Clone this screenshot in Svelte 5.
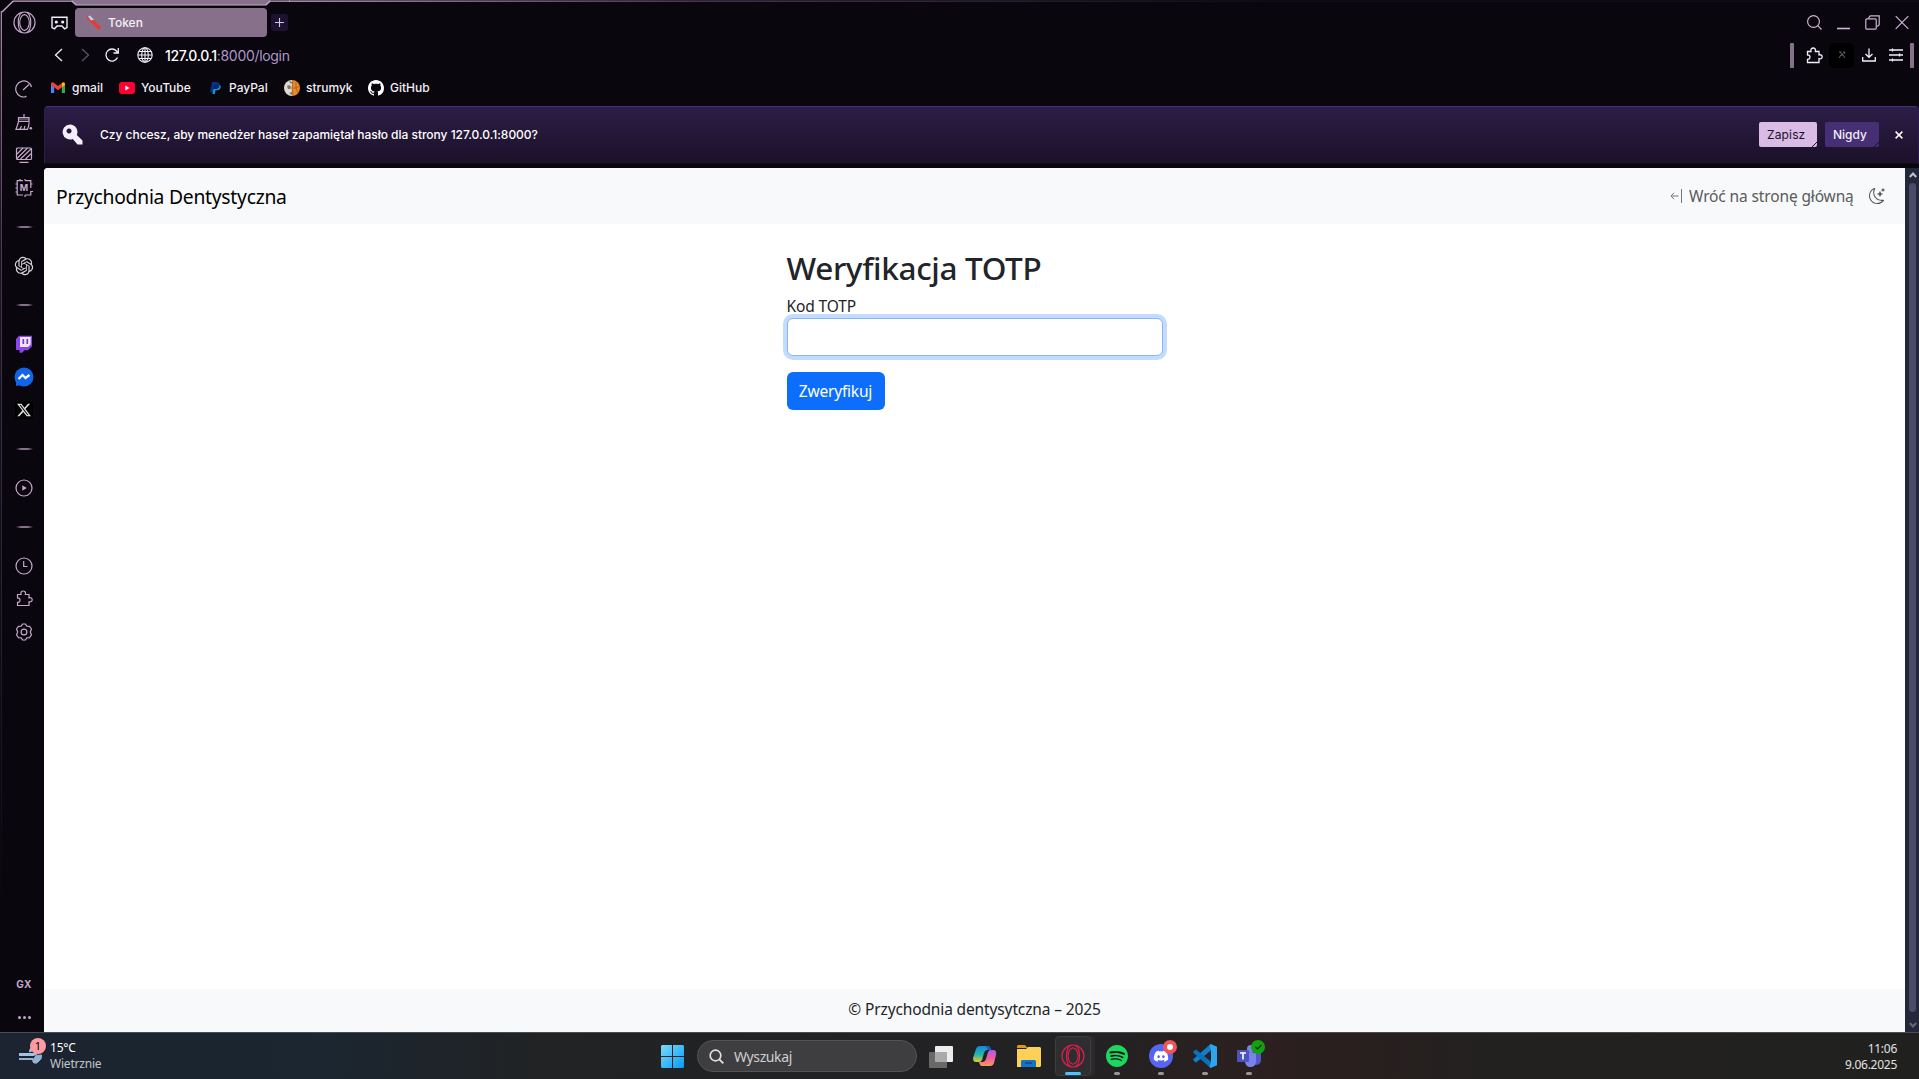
<script>
  const openai = 'M22.2819 9.8211a5.9847 5.9847 0 0 0-.5157-4.9108 6.0462 6.0462 0 0 0-6.5098-2.9A6.0651 6.0651 0 0 0 4.9807 4.1818a5.9847 5.9847 0 0 0-3.9977 2.9 6.0462 6.0462 0 0 0 .7427 7.0966 5.98 5.98 0 0 0 .511 4.9107 6.051 6.051 0 0 0 6.5146 2.9001A5.9847 5.9847 0 0 0 13.2599 24a6.0557 6.0557 0 0 0 5.7718-4.2058 5.9894 5.9894 0 0 0 3.9977-2.9001 6.0557 6.0557 0 0 0-.7475-7.0729zm-9.022 12.6081a4.4755 4.4755 0 0 1-2.8764-1.0408l.1419-.0804 4.7783-2.7582a.7948.7948 0 0 0 .3927-.6813v-6.7369l2.02 1.1686a.071.071 0 0 1 .038.052v5.5826a4.504 4.504 0 0 1-4.4945 4.4944zm-9.6607-4.1254a4.4708 4.4708 0 0 1-.5346-3.0137l.142.0852 4.783 2.7582a.7712.7712 0 0 0 .7806 0l5.8428-3.3685v2.3324a.0804.0804 0 0 1-.0332.0615L9.74 19.9502a4.4992 4.4992 0 0 1-6.1408-1.6464zM2.3408 7.8956a4.485 4.485 0 0 1 2.3655-1.9728V11.6a.7664.7664 0 0 0 .3879.6765l5.8144 3.3543-2.0201 1.1685a.0757.0757 0 0 1-.071 0l-4.8303-2.7865A4.504 4.504 0 0 1 2.3408 7.872zm16.5963 3.8558L13.1038 8.364 15.1192 7.2a.0757.0757 0 0 1 .071 0l4.8303 2.7913a4.4944 4.4944 0 0 1-.6765 8.1042v-5.6772a.79.79 0 0 0-.407-.667zm2.0107-3.0231l-.142-.0852-4.7735-2.7818a.7759.7759 0 0 0-.7854 0L9.409 9.2297V6.8974a.0662.0662 0 0 1 .0284-.0615l4.8303-2.7866a4.4992 4.4992 0 0 1 6.6802 4.66zM8.3065 12.863l-2.02-1.1638a.0804.0804 0 0 1-.038-.0567V6.0742a4.4992 4.4992 0 0 1 7.3757-3.4537l-.142.0805L8.704 5.459a.7948.7948 0 0 0-.3927.6813zm1.0976-2.3654l2.602-1.4998 2.6069 1.4998v2.9994l-2.5974 1.4997-2.6067-1.4997Z';
  const puzzle = 'M2.5 4.5H6C5.3 1.8 7 1 8.2 1s2.9.8 2.2 3.5H14v3.4c2-.6 3.2.5 3.2 1.9S16 12.300 14 11.700V15.500H2.500v-3.200C4.600 12.500 5 11 5 10S4.300 7.700 2.500 8Z';
</script>

{#snippet operaIcon(size)}
  <svg width={size} height={size} viewBox="0 0 24 24" fill="none" stroke="currentColor" stroke-width="1.15">
    <circle cx="12" cy="12" r="11" /><ellipse cx="12" cy="12" rx="5" ry="8.200" /><path d="M10 1.300C4 4 4 20 10 22.700M14 1.300c6 2.700 6 18.700 0 21.400" />
  </svg>
{/snippet}

<div class="desktop">
  <div class="browser">
    <svg class="frame" width="1919" height="1032" viewBox="0 0 1919 1032" fill="none">
      <defs>
        <linearGradient id="side" x1="0" y1="0" x2="0" y2="1"><stop stop-color="#a58ba9" /><stop offset=".25" stop-color="#4c3a52" /><stop offset=".8" stop-color="#1b1624" /><stop offset="1" stop-color="#09060d" /></linearGradient>
        <linearGradient id="top" x1="0" y1="0" x2="1" y2="0"><stop stop-color="#c9aed0" /><stop offset=".25" stop-color="#54405c" /><stop offset=".6" stop-color="#120d18" /></linearGradient>
      </defs>
      <path d="M71 0h200l-4 4.500H76Z" fill="#87718a" />
      <path d="M2 12 13 1.200h59l4 3.600h190l4-3.600h20" stroke="#c5a9cc" stroke-width="1.300" />
      <rect x="289" y="0.500" width="1630" height="1.300" fill="url(#top)" />
      <rect x="0.700" y="11" width="1.300" height="900" fill="url(#side)" />
    </svg>

    <aside>
      <div class="logo">{@render operaIcon(23)}</div>
      <div class="cell"><svg width="18" height="18" viewBox="0 0 18 18"><path d="M11.500 16.500A8 8 0 1 1 16.500 7M8 10l6-5.500M10 17l1-1" /></svg></div>
      <div class="cell"><svg width="18" height="18" viewBox="0 0 18 18"><path d="M9 1v4M3.500 8.500V4.700H14v4M2.800 8.500H14.500M3.500 9 1 16.300h11.500c1-2 1.600-4.500 1.600-7M5 16l1.500-3M9 16l1-3" /><rect x="4" y="5.500" width="10" height="2" fill="currentColor" stroke="none" opacity=".45" /><circle cx="15.800" cy="15.200" r="1.300" fill="currentColor" stroke="none" /></svg></div>
      <div class="cell"><svg width="18" height="18" viewBox="0 0 18 18"><rect x="1.500" y="2" width="15" height="11.500" rx="1" /><path d="m2 8 6-6M2 12.500 12.500 2M5.500 13 16 3M10.500 13 16 7.700M4.500 16.300h9" /></svg></div>
      <div class="cell"><div class="chip"><svg width="18" height="18" viewBox="0 0 18 18"><path d="M8 1.700H2.200V16H8M10 1.700h5.800V9M15.800 12v4H10M5 0v1.500M10 0v1.500M.5 5H2M.5 9H2M.5 13H2M16 12.500h2M16 5h1.500M10 16v2" /></svg><span>M</span></div></div>
      <div class="dash"><i></i></div>
      <div class="cell"><svg width="20" height="20" viewBox="-1 -1 26 26"><path d={openai} fill="#d5d3d9" stroke="none" /></svg></div>
      <div class="dash"><i></i></div>
      <div class="cell"><svg width="18" height="18" viewBox="0 0 18 18"><path d="M4 .7h13v10.500l-4 4H9.500L7 17.700H4.500V15H1V4Z" fill="#8c46e8" stroke="none" /><path d="M5 2h10.700v7.500L13 12H5Z" fill="#eee6fa" stroke="none" /><path d="M8.300 4v5M12.300 4v5" stroke="#7b3bd0" stroke-width="1.700" /></svg></div>
      <div class="cell"><svg width="20" height="20" viewBox="0 0 20 20"><circle cx="10" cy="10" r="9.500" fill="#1264e8" stroke="none" /><path d="M2 13v6l5-1Z" fill="#1264e8" stroke="none" /><path d="m4.500 12 4-4 3 3 4-3" stroke="#fff" stroke-width="2.200" /></svg></div>
      <div class="cell"><div class="xtile"><svg width="14" height="14" viewBox="0 0 24 24"><path fill="#ddd" stroke="none" d="M18.901 1.153h3.680l-8.040 9.190L24 22.846h-7.406l-5.800-7.584-6.638 7.584H.474l8.600-9.830L0 1.154h7.594l5.243 6.932ZM17.610 20.644h2.039L6.486 3.240H4.298Z" /></svg></div></div>
      <div class="dash"><i></i></div>
      <div class="cell"><svg width="18" height="18" viewBox="0 0 18 18"><circle cx="9" cy="9" r="8" /><path d="M7.300 6.300v5.400L11.800 9Z" fill="currentColor" stroke="none" /></svg></div>
      <div class="dash"><i></i></div>
      <div class="cell"><svg width="18" height="18" viewBox="0 0 18 18"><circle cx="9" cy="9" r="8" /><path d="M8.700 4v5.500h3.800" /></svg></div>
      <div class="cell"><svg width="18" height="18" viewBox="0 0 18 18"><path d={puzzle} /></svg></div>
      <div class="cell"><svg width="18" height="18" viewBox="0 0 18 18"><path stroke-linejoin="round" d="M7.500 1h3l1.300 2.200 2.700.100L16.500 6 15.300 9l1.200 3-2 2.700-2.700.100L10.500 17h-3l-1.300-2.200-2.700-.100L1.500 12l1.200-3L1.500 6l2-2.700 2.700-.100Z" /><circle cx="9" cy="9" r="2.900" /></svg></div>
      <div class="foot"><b>GX</b><span class="dots"><i></i><i></i><i></i></span></div>
    </aside>

    <main>
      <header class="titlebar">
        <svg class="pad" width="17" height="14" viewBox="0 0 17 14" fill="none" stroke="#f3eef7" stroke-width="1.400"><path d="M1 1.200h15V11.500l-2.500 1.300L11 10H6l-2.500 2.800L1 11.500Z" /><circle cx="5.300" cy="6" r=".9" fill="#fff" /><circle cx="11.700" cy="6" r=".9" fill="#fff" /></svg>
        <div class="tab">
          <svg width="15" height="15" viewBox="0 0 15 15"><path d="m2.500 2.500 10.300 10" stroke="#ed3833" stroke-width="3.600" stroke-linecap="round" /><path d="M2 1.500 4 .5l4 4-3 1Z" fill="#a9d9f2" /></svg>
          <span>Token</span>
        </div>
        <button class="plus" aria-label="Nowa karta"><svg width="9" height="9" viewBox="0 0 9 9"><path d="M4.500 0v9M0 4.500h9" stroke="#d4c6e0" stroke-width="1.100" /></svg></button>
        <div class="controls">
          <svg width="15" height="15" viewBox="0 0 15 15"><circle cx="6.500" cy="6.500" r="5.900" /><path d="m10.700 10.700 3.800 3.800" /></svg>
          <svg width="13" height="15" viewBox="0 0 13 15"><path d="M0 13.500h13" stroke-width="1.600" /></svg>
          <svg width="15" height="15" viewBox="0 0 15 15"><rect x=".8" y="3.800" width="10.400" height="10.400" rx="1" /><path d="M3.800 3.500v-1l1.500-1.700h8.900v9l-1.500 1.400h-1.200" /></svg>
          <svg width="14" height="15" viewBox="0 0 14 15"><path d="m.7 1.200 12.600 12.600M13.300 1.200.7 13.800" /></svg>
        </div>
      </header>

      <div class="address">
        <svg width="9" height="14" viewBox="0 0 9 14"><path d="M8 1 1.500 7 8 13" stroke="#f3eef7" /></svg>
        <svg class="fwd" width="9" height="14" viewBox="0 0 9 14"><path d="m1 1 6.500 6L1 13" /></svg>
        <svg class="reload" width="14" height="14" viewBox="0 0 14 14"><path d="M12.500 9.500A6 6 0 1 1 11.500 3L13 5M13.300 0v5H8.500" /></svg>
        <svg class="globe" width="16" height="16" viewBox="0 0 16 16"><circle cx="8" cy="8" r="7.200" /><ellipse cx="8" cy="8" rx="3.300" ry="7.200" /><path d="M8 1v14M1 8h14M2 4.500h12M2 11.500h12" /></svg>
        <span class="url"><b>127.0.0.1</b>:8000/login</span>
        <div class="tools">
          <i class="bar"></i>
          <svg class="pz" width="18" height="17" viewBox="0 0 18 17"><path d={puzzle} /></svg>
          <div class="ext"><svg width="8" height="8" viewBox="0 0 8 8"><path class="mark" d="m1 7 2-3h2l2 3M1 1h2v1.500M5 1h2L6 3M3 4l1-1.500L5 4" /></svg></div>
          <svg class="dl" width="14" height="14" viewBox="0 0 14 14"><path d="M7 .5V9M3.500 6 7 9.300 10.500 6M.7 9v4h12.600V9" /></svg>
          <svg class="sl" width="14" height="14" viewBox="0 0 14 14"><path d="M0 2h14M0 7h14M0 12h14M3.500 .5v3M10.500 5.500v3M3.500 10.500v3" /></svg>
          <i class="bar"></i>
        </div>
      </div>

      <nav class="bookmarks">
        <span class="bm b1"><svg width="14" height="11" viewBox="0 0 14 11"><path d="M0 1.500V11h3.200V4Z" fill="#4285f4" /><path d="M14 1.500V11h-3.200V4Z" fill="#34a853" /><path d="M10.800 4V1Q13-.7 14 1.500V3L10.800 5.500Z" fill="#fbbc04" /><path d="M0 1.500Q1-.7 3.200 1L7 4l3.800-3v4.300L7 8.200 0 3Z" fill="#ea4335" /></svg><span>gmail</span></span>
        <span class="bm b2"><svg width="16" height="12" viewBox="0 0 16 12"><rect width="16" height="12" rx="3" fill="#ff0033" /><path d="M6.300 3.500v5L10.500 6Z" fill="#fff" /></svg><span>YouTube</span></span>
        <span class="bm b3"><svg width="11" height="12" viewBox="0 0 11.500 13"><path d="M2 0h5q4 .5 3 4-1 3.500-5 3.500H4L3.300 11H0Z" fill="#00368f" /><path d="M10.200 3q2 1.500.8 4-1 2-4 2H5.800L5 13H2.500l.8-5Z" fill="#1297db" /><path d="M3.500 7.500 4 3.500h5l1.100.500q-.5 3.500-5 3.700Z" fill="#001f60" /></svg><span>PayPal</span></span>
        <span class="bm b4"><svg width="16" height="16" viewBox="0 0 16 16"><path d="M8 0a8 8 0 0 0 0 16Z" fill="#dfdac9" /><path d="M8 0a8 8 0 0 1 0 16Z" fill="#ea8b2b" /><path d="M9 1q-2 7 0 14M15.500 6Q11 9 8.500 8M12 2q-1 6 2 11" fill="none" stroke="#a85a1c" stroke-width=".8" /><path d="m3 6 2-1 2 1.500L6.500 9H4ZM5 1l3 1v1.500L6 3ZM5 13l3-1v3Z" fill="#77796f" /></svg><span>strumyk</span></span>
        <span class="bm b5"><svg width="16" height="16" viewBox="0 0 16 16"><path fill="#fff" d="M8 0C3.580 0 0 3.580 0 8c0 3.540 2.290 6.530 5.470 7.590.4.070.550-.170.550-.380 0-.190-.010-.820-.010-1.490-2.010.370-2.530-.490-2.690-.940-.090-.230-.480-.940-.820-1.130-.280-.150-.680-.520-.010-.530.630-.010 1.080.580 1.230.820.720 1.210 1.870.870 2.330.660.070-.520.280-.870.510-1.070-1.780-.2-3.640-.890-3.640-3.950 0-.870.310-1.590.820-2.150-.080-.2-.360-1.020.080-2.120 0 0 .670-.210 2.200.820.640-.180 1.320-.270 2-.270s1.360.090 2 .270c1.530-1.040 2.200-.820 2.200-.820.440 1.100.160 1.920.080 2.120.510.560.820 1.270.820 2.150 0 3.070-1.870 3.750-3.650 3.950.290.250.540.730.540 1.480 0 1.070-.010 1.930-.010 2.200 0 .210.150.460.550.380A8.010 8.010 0 0 0 16 8c0-4.420-3.580-8-8-8" /></svg><span>GitHub</span></span>
      </nav>

      <div class="banner">
        <svg width="21" height="21" viewBox="0 0 21 21"><path fill-rule="evenodd" fill="#f3eefa" d="M8 .5a7.500 7.500 0 0 1 6.800 10.600l5.700 5.400v4h-5L10.800 15A7.500 7.500 0 1 1 8 .5M7 4.500a2.500 2.500 0 1 0 .1 0Z" /></svg>
        <p>Czy chcesz, aby menedżer haseł zapamiętał hasło dla strony 127.0.0.1:8000?</p>
        <button class="save">Zapisz<svg width="5" height="5" viewBox="0 0 5 5"><path d="M0 5 5 0" stroke="#1b1126" /></svg></button>
        <button class="never">Nigdy<svg width="5" height="5" viewBox="0 0 5 5"><path d="M0 5 5 0" stroke="#1b1126" /></svg></button>
        <svg class="x" width="8" height="8" viewBox="0 0 8 8"><path d="m.6.6 6.800 6.800M7.400.6.6 7.400" stroke="#fff" stroke-width="1.500" /></svg>
      </div>

      <div class="viewport">
        <div class="page">
          <div class="navbar">
            <span class="brand">Przychodnia Dentystyczna</span>
            <svg class="back" width="12" height="14" viewBox="0 0 12 14" fill="none" stroke="#747678"><path d="M8.500 7H1M4 3.800 1 7l3 3.200" /><path d="M11.500 0v14" /></svg>
            <span class="home">Wróć na stronę główną</span>
            <svg width="16" height="16" viewBox="0 0 16 16" fill="#525457"><path d="M6 .278a.77.770 0 0 1 .080.858 7.200 7.200 0 0 0-.878 3.460c0 4.021 3.278 7.277 7.318 7.277q.792-.001 1.533-.160a.790.790 0 0 1 .810.316.730.730 0 0 1-.031.893A8.350 8.350 0 0 1 8.344 16C3.734 16 0 12.286 0 7.710 0 4.266 2.114 1.312 5.124.060A.750.750 0 0 1 6 .278M4.858 1.311A7.270 7.270 0 0 0 1.025 7.710c0 4.020 3.279 7.276 7.319 7.276a7.320 7.320 0 0 0 5.205-2.162q-.506.063-1.029.063c-4.610 0-8.343-3.714-8.343-8.290 0-1.167.242-2.278.681-3.286" /><path d="M10.794 3.148a.217.217 0 0 1 .412 0l.387 1.162c.173.518.579.924 1.097 1.097l1.162.387a.217.217 0 0 1 0 .412l-1.162.387a1.730 1.730 0 0 0-1.097 1.097l-.387 1.162a.217.217 0 0 1-.412 0l-.387-1.162A1.730 1.730 0 0 0 9.310 6.593l-1.162-.387a.217.217 0 0 1 0-.412l1.162-.387a1.730 1.730 0 0 0 1.097-1.097zM13.863.099a.145.145 0 0 1 .274 0l.258.774c.115.346.386.617.732.732l.774.258a.145.145 0 0 1 0 .274l-.774.258a1.160 1.160 0 0 0-.732.732l-.258.774a.145.145 0 0 1-.274 0l-.258-.774a1.160 1.160 0 0 0-.732-.732l-.774-.258a.145.145 0 0 1 0-.274l.774-.258c.346-.115.617-.386.732-.732z" /></svg>
          </div>
          <form>
            <h2>Weryfikacja TOTP</h2>
            <label for="code">Kod TOTP</label>
            <input id="code" type="text" />
            <button type="button">Zweryfikuj</button>
          </form>
          <footer><span>© Przychodnia dentysytczna – 2025</span></footer>
        </div>
        <div class="scroll">
          <svg width="8" height="6" viewBox="0 0 8 6"><path d="M.8 5 4 1.500 7.200 5" stroke="#c4c4c8" stroke-width="2" /></svg>
          <div class="thumb"></div>
          <svg width="8" height="6" viewBox="0 0 8 6"><path d="M.8 1 4 4.500 7.200 1" stroke="#676770" stroke-width="2" /></svg>
        </div>
      </div>
    </main>
  </div>

  <div class="taskbar">
    <div class="weather">
      <div class="wind">
        <svg width="25" height="26" viewBox="0 0 25 26"><path d="M1 15.500h14q5-.5 3-5-2-2.500-4.500-.5-1.500 1.500-1 3" stroke="#a9c1de" stroke-width="3" /><path d="M1 20h14q-1 3 1 4 3 1 5-2 3-2 2.500-6l-5.500.5-2 3" fill="#8fb2d5" stroke="#8fb2d5" stroke-width="1" /><path d="M1 20h14" stroke="#8fb2d5" stroke-width="2" /></svg>
        <span class="count">1</span>
      </div>
      <div class="wtext"><span>15°C</span><span class="dim">Wietrznie</span></div>
    </div>
    <div class="apps">
      <svg width="23" height="23" viewBox="0 0 23 23"><defs><linearGradient id="win" x1="0" y1="0" x2="1" y2="1"><stop stop-color="#7ad9fb" /><stop offset="1" stop-color="#0a9bf5" /></linearGradient></defs><path d="M1 0h10v11H0V1ZM12 0h10l1 1v10H12ZM0 12h11v11H1l-1-1ZM12 12h11v10l-1 1H12Z" fill="url(#win)" /></svg>
      <div class="search"><svg width="15" height="15" viewBox="0 0 15 15"><circle cx="6.500" cy="6.500" r="5.300" stroke="#dededf" stroke-width="1.700" /><path d="m10.300 10.300 4 4" stroke="#dededf" stroke-width="1.900" /></svg><span>Wyszukaj</span></div>
      <div class="app first"><svg width="24" height="23" viewBox="0 0 24 23"><rect x="6" y="1" width="18" height="16" rx="1" fill="#ededed" /><rect y="7" width="18" height="16" rx="1" fill="#757575" opacity=".85" /><path d="M6 7h12v10H6Z" fill="#aaa" /></svg></div>
      <div class="app"><svg width="24" height="24" viewBox="0 0 24 24"><defs><linearGradient id="cpa" x1="0" y1="0" x2="0" y2="1"><stop stop-color="#1585e6" /><stop offset=".55" stop-color="#25b9a5" /><stop offset="1" stop-color="#f0c72b" /></linearGradient><linearGradient id="cpb" x1="0" y1="0" x2="0" y2="1"><stop stop-color="#a95df0" /><stop offset=".5" stop-color="#ef5ca0" /><stop offset="1" stop-color="#fb9a60" /></linearGradient></defs><path d="M7 2h8q2 0 3 4h-4q-2 0-3 3l-2 7q-1 2-3 2H3q-3 0-3-4L3 5q1-3 4-3Z" fill="url(#cpa)" /><path d="M17 22H9q-2 0-3-4h4q2 0 3-3l2-7q1-2 3-2h2q4 0 3 5l-2 8q-1 3-4 3Z" fill="url(#cpb)" /><path d="M13 2h2q2 0 3 4h-3Z" fill="#1c57c8" /></svg></div>
      <div class="app"><svg width="24" height="22" viewBox="0 0 24 22"><path d="M1 0h7l2.500 3H0V1Z" fill="#dc9a0c" /><path d="M0 4h9l2-2h12l1 1v18l-1 1H0Z" fill="#fdd057" /><path d="M4 22v-6l1-1h13l1 1v6Z" fill="#1273c7" /><path d="M8 18h7" stroke="#0a4a92" stroke-width="1.500" /></svg></div>
      <div class="app active">{@render operaIcon(24)}<i class="run on"></i></div>
      <div class="app"><svg width="22" height="22" viewBox="0 0 24 24"><circle cx="12" cy="12" r="11" fill="#101a13" /><path fill="#1ed760" d="M12 0C5.400 0 0 5.400 0 12s5.400 12 12 12 12-5.400 12-12S18.660 0 12 0zm5.521 17.340c-.240.359-.660.480-1.021.240-2.820-1.740-6.360-2.101-10.561-1.141-.418.122-.779-.179-.899-.539-.120-.421.180-.780.540-.900 4.560-1.021 8.520-.600 11.640 1.320.420.180.479.659.301 1.020zm1.440-3.300c-.301.420-.841.600-1.262.300-3.239-1.980-8.159-2.580-11.939-1.380-.479.120-1.020-.120-1.140-.600-.120-.480.120-1.021.600-1.141C9.600 9.900 15 10.561 18.720 12.840c.361.181.540.780.241 1.200zm.120-3.360C15.240 8.400 8.820 8.160 5.160 9.301c-.600.179-1.200-.181-1.380-.721-.180-.601.180-1.200.720-1.381 4.260-1.260 11.280-1.020 15.721 1.621.539.300.719 1.020.419 1.560-.299.421-1.020.599-1.559.300z" /></svg><i class="run"></i></div>
      <div class="app"><svg width="24" height="24" viewBox="0 0 24 24"><circle cx="12" cy="12" r="12" fill="#5865f2" /><path transform="translate(4.800 5) scale(.6)" fill="#fff" fill-rule="evenodd" d="M20.317 4.370a19.800 19.800 0 0 0-4.885-1.515c-.240.370-.520.870-.690 1.290a18.300 18.300 0 0 0-5.486 0c-.170-.400-.420-.880-.650-1.290a19.700 19.700 0 0 0-4.930 1.540C.533 9.046-.319 13.580.100 18.060a19.900 19.900 0 0 0 6.050 3.080c.500-.650.920-1.350 1.280-2.080a13 13 0 0 1-1.920-.930l.450-.420c3.930 1.793 8.180 1.793 12.060 0l.450.420a12 12 0 0 1-1.910.930c.370.730.790 1.420 1.270 2.080a19.800 19.800 0 0 0 6.070-3.080c.500-5.177-.838-9.674-3.583-13.690ZM8.020 15.330c-1.180 0-2.157-1.086-2.157-2.419s.956-2.419 2.157-2.419 2.176 1.095 2.157 2.419c0 1.333-.956 2.419-2.157 2.419Zm7.975 0c-1.183 0-2.157-1.086-2.157-2.419s.955-2.419 2.157-2.419 2.176 1.095 2.157 2.419c0 1.333-.946 2.419-2.157 2.419Z" /></svg><span class="badge red"></span><i class="run"></i></div>
      <div class="app"><svg width="24" height="24" viewBox="0 0 24 24"><path d="m17.500 0 1 6L3 18.500 1 17l-1-1.500 17-15Z" fill="#1180cc" /><path d="M3 5.500 1.200 6.800 0 8.500l17.500 15.500 1-6Z" fill="#0b70bb" /><path d="M17.500 0 24 2.800v18.400L17.500 24l-1-1.500 1.500-4.500V6l-1.500-4.500Z" fill="#2aa7f0" /></svg><i class="run"></i></div>
      <div class="app"><svg width="24" height="24" viewBox="0 0 24 24"><circle cx="14" cy="5" r="4" fill="#7b83eb" /><path d="M17 8h7v9q-1 4-6 4Z" fill="#5059c9" /><path d="M8 9h11v9q-1 5.500-6 5-4 0-5-5Z" fill="#7b83eb" /><rect y="6" width="12" height="12" rx="1" fill="#4b53bc" /><path d="M3 9h6M6 9v6.500" stroke="#fff" stroke-width="1.600" /></svg><span class="badge green"><svg width="7" height="6" viewBox="0 0 7 6"><path d="m.5 3 2 2 4-4" stroke="#0b280b" stroke-width="1.200" /></svg></span><i class="run"></i></div>
    </div>
    <div class="clock"><span>11:06</span><span>9.06.2025</span></div>
  </div>
</div>

<style>
  :global(body) { margin: 0; overflow: hidden; }
  * { box-sizing: border-box; }
  svg { display: block; flex: none; }
  button { border: 0; padding: 0; font: inherit; }
  .desktop { width: 1919px; height: 1079px; display: flex; flex-direction: column; background: #09060d; font-family: "Noto Sans", "Open Sans", sans-serif; }
  .browser { position: relative; height: 1032px; display: grid; grid-template-columns: 44px 1fr; color: #c9b1d8; font-family: Inter, sans-serif; }
  .frame { position: absolute; inset: 0; pointer-events: none; }
  aside { display: flex; flex-direction: column; padding-left: 4px; align-items: center; color: #c5a9cc; }
  aside svg { fill: none; stroke: currentColor; stroke-width: 1.2; }
  .logo { height: 72px; padding-top: 10.5px; }
  .cell { height: 33px; display: grid; place-items: center; flex: none; }
  .dash { height: 45px; display: grid; place-items: center; flex: none; }
  .dash i { width: 17px; height: 2px; background: linear-gradient(90deg, transparent, #87718a 30%, #87718a 70%, transparent); }
  .chip { display: grid; place-items: center; }
  .chip > * { grid-area: 1 / 1; }
  .chip span { font: 700 9px/12px Inter, sans-serif; }
  .xtile { width: 18px; height: 18px; background: #000; border-radius: 3px; display: grid; place-items: center; }
  .foot { margin-top: auto; height: 58px; display: flex; flex-direction: column; align-items: center; }
  .foot b { font: 700 10px/20px Inter, sans-serif; letter-spacing: .5px; }
  .dots { display: flex; gap: 2px; margin: 22px 0 0; }
  .dots i { width: 3px; height: 3px; border-radius: 50%; background: currentColor; }

  main { display: flex; flex-direction: column; min-width: 0; }
  .titlebar { height: 37px; padding: 8px 7px 0; display: flex; align-items: center; }
  .tab { margin-left: 7px; width: 192px; height: 29px; border-radius: 4px; background: #87718a; display: flex; align-items: center; padding-left: 11px; gap: 7px; color: #f5eff7; font-size: 12px; font-weight: 500; }
  .plus { margin-left: 4px; width: 17px; height: 17px; border-radius: 3px; background: #1d1230; display: grid; place-items: center; }
  .controls { margin-left: auto; display: flex; gap: 15px; padding-right: 3px; }
  .controls svg { fill: none; stroke: #cfb2d8; stroke-width: 1.2; }
  .address { height: 36px; padding: 0 5px 0 10px; display: flex; align-items: center; }
  .address svg { fill: none; stroke: #f3eef7; stroke-width: 1.3; }
  .address .fwd { margin-left: 18px; stroke: #5c5761; }
  .reload { margin-left: 15px; }
  .address .globe { margin-left: 18px; stroke-width: 1.1; }
  .url { margin-left: 12px; font-size: 14px; color: #ad98c9; letter-spacing: -.31px; }
  .url b { color: #fff; font-weight: 500; }
  .tools { margin-left: auto; display: flex; align-items: center; }
  .bar { width: 4px; height: 25px; border-radius: 1px; background: #87718a; }
  .pz { margin-left: 11px; }
  .ext { margin-left: 6px; width: 25px; height: 25px; border-radius: 5px; background: #000; display: grid; place-items: center; }
  .mark { stroke: #6d7476; stroke-width: .9; }
  .dl { margin-left: 8px; }
  .sl { margin: 0 7px 0 13px; }
  .bookmarks { height: 33px; padding: 0 0 4px 7px; display: flex; align-items: center; font-size: 12px; font-weight: 500; color: #f3eef7; }
  .bm { display: flex; align-items: center; flex: none; gap: 6px; }
  .b1 { width: 68px; gap: 7px; }
  .b2 { width: 91px; }
  .b3 { width: 74px; gap: 8px; }
  .b4 { width: 84px; }
  .banner { height: 58px; border: 1px solid #2e1c4c; border-top-color: #47307a; border-bottom-color: #120c1a; border-radius: 4px 4px 0 0; background: linear-gradient(#2c1d47, #1b1129); display: flex; align-items: center; padding: 0 10px 1px 17px; font-size: 12px; font-weight: 500; color: #fff; }
  .banner p { margin: 0 auto 1px 17px; letter-spacing: -.02px; }
  .banner button { height: 25px; border-radius: 2px; display: flex; align-items: center; padding: 0 0 0 8px; position: relative; font-weight: 500; }
  .banner button svg { position: absolute; right: 0; bottom: 0; }
  .banner .save { width: 58px; background: #dabbe6; color: #1b1126; margin-right: 8px; font-weight: 400; letter-spacing: .15px; }
  .banner .never { width: 54px; background: #472f75; color: #f3eef7; }
  .x { margin: 0 5px 0 16px; }

  .viewport { margin-top: 4px; height: 864px; display: flex; font-family: "Noto Sans", "Open Sans", sans-serif; }
  .page { width: 1861px; background: #fff; border-top-left-radius: 4px; overflow: hidden; display: flex; flex-direction: column; color: #212529; font-size: 15.5px; line-height: 24px; letter-spacing: -.13px; }
  .navbar { height: 56px; padding: 0 20px 0 12px; background: #f8f9fa; display: flex; align-items: center; color: #5a5b5c; }
  .brand { margin-right: auto; padding-top: 2px; font-size: 19.3px; color: #000; letter-spacing: -.25px; }
  .back { margin-right: 7px; }
  .home { width: 164px; margin-right: 16px; white-space: nowrap; }
  form { width: 376px; margin: 24px auto 0; display: flex; flex-direction: column; align-items: flex-start; }
  h2 { margin: 0 0 8px; padding-top: 1px; height: 38.4px; font-size: 31.5px; line-height: 38.4px; font-weight: 500; letter-spacing: -.35px; white-space: nowrap; }
  label { height: 24px; }
  input { width: 376px; height: 38px; border: 1px solid #86b7fe; border-radius: 6px; box-shadow: 0 0 0 4px #c2dbfe; outline: 0; background: #fff; }
  form button { margin-top: 16px; width: 98px; height: 38px; border-radius: 6px; background: #0d6efd; color: #fff; letter-spacing: -.2px; }
  footer { margin-top: auto; height: 43px; padding-top: 8px; background: #f8f9fa; text-align: center; }
  .scroll { width: 14px; background: #23273a; display: flex; flex-direction: column; align-items: center; padding: 4px 0 4px 1px; }
  .scroll svg { fill: none; }
  .thumb { width: 7px; flex: 1; margin: 5px 0 10px; border-radius: 4px; background: #484c66; }

  .taskbar { height: 47px; border-top: 1px solid #4a4c50; display: grid; grid-template-columns: 661px 1fr 200px; align-items: center; background: linear-gradient(90deg, #1b2430 0, #1b2630 17%, #212325 28%, #222223 55%, #2c2020 66%, #291e1e 70%, #222120 78%, #20201f 100%); color: #fff; font-size: 12px; }
  .taskbar svg { fill: none; }
  .weather { display: flex; padding-left: 18px; align-items: center; height: 46px; }
  .wind { position: relative; width: 32px; height: 36px; padding-top: 1px; }
  .count { position: absolute; left: 12px; top: 0; width: 16px; height: 16px; border-radius: 50%; background: #ff99a4; color: #000; font-size: 11px; line-height: 16px; text-align: center; }
  .wtext { display: flex; flex-direction: column; line-height: 16px; letter-spacing: -.2px; }
  .dim { color: #c2c5c9; }
  .apps { display: flex; align-items: center; height: 46px; }
  .search { margin-left: 13px; width: 220px; height: 32px; border-radius: 16px; background: #3e3e41; border: 1px solid #545457; display: flex; align-items: center; gap: 10px; padding-left: 11px; font-size: 14px; color: #cfcfd0; letter-spacing: -.4px; }
  .app { position: relative; width: 40px; height: 40px; margin-right: 4px; display: grid; place-items: center; }
  .first { margin-left: 4px; }
  .active { color: #e0204f; background: #2e2e30; border: 1px solid #3d3d3f; border-radius: 4px; width: 36px; margin: 0 6px 0 2px; box-shadow: 4px 0 0 #2b2b2d; }
  .run { position: absolute; left: 50%; bottom: 1px; width: 6px; height: 3px; margin-left: -3px; border-radius: 2px; background: #98989a; }
  .on { width: 16px; margin-left: -8px; bottom: 0; background: #4cc2ff; }
  .badge { position: absolute; left: 22px; top: 4px; width: 14px; height: 14px; border-radius: 50%; display: grid; place-items: center; }
  .red { background: #fff; border: 4px solid #f05454; }
  .green { background: #13a10e; }
  .clock { display: flex; flex-direction: column; align-items: flex-end; padding: 1px 22px 0 0; line-height: 16px; color: #e2e2e2; letter-spacing: -.27px; }
</style>
